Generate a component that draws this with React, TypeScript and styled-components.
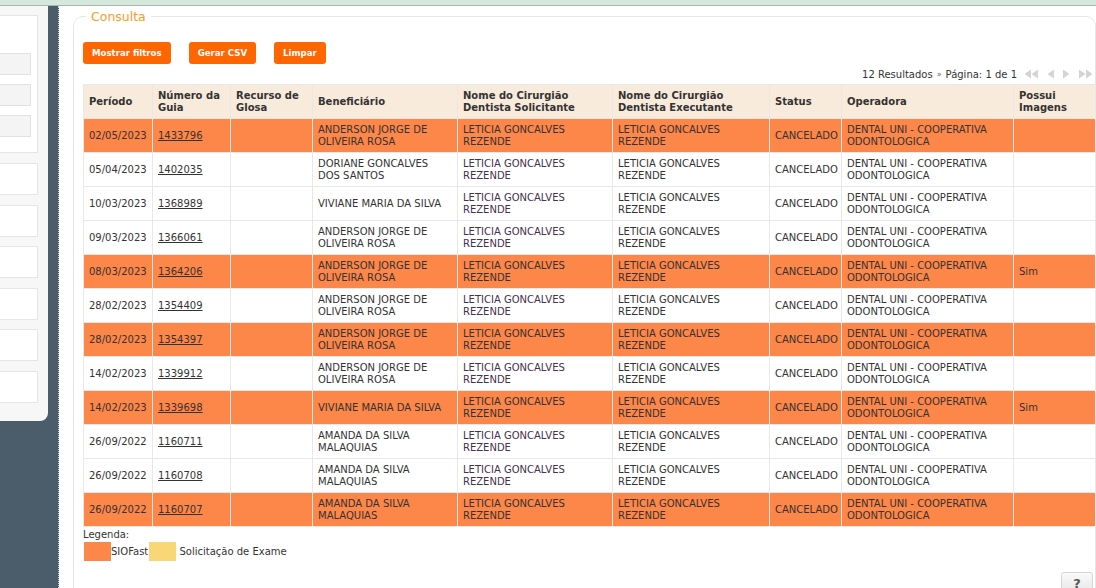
import React from "react";
import styled, { createGlobalStyle } from "styled-components";

const GlobalStyle = createGlobalStyle`
  html, body {
    margin: 0;
    padding: 0;
    height: 100%;
    overflow: hidden;
    background: #fff;
  }
  body {
    font-family: "DejaVu Sans", Verdana, sans-serif;
    font-size: 10px;
    color: #333;
  }
  #root {
    height: 100%;
  }
`;

const orange = "#fd8649";
const yellow = "#fad776";

const Page = styled.div`
  height: 588px;
  display: flex;
  flex-direction: column;
  position: relative;
  overflow: hidden;
`;

const TopStrip = styled.div`
  height: 5px;
  flex: none;
  background: #d5e8dc;
  border-bottom: 1px solid #a9b6ae;
`;

const Body = styled.div`
  flex: 1;
  display: flex;
  min-height: 0;
`;

const Sidebar = styled.aside`
  width: 58px;
  flex: none;
  background: #4b5c6b;
  border-right: 1px dotted #c9cfd4;
`;

const SidePanel = styled.div`
  width: 48px;
  height: 415px;
  background: #f7f7f7;
  border-bottom-right-radius: 8px;
  padding-top: 9px;
  box-sizing: border-box;
  display: flex;
  flex-direction: column;
  gap: 10px;
`;

const SideBox = styled.div<{ $h: number; $pad?: number }>`
  width: 38px;
  height: ${(p) => p.$h}px;
  flex: none;
  box-sizing: border-box;
  background: #fff;
  border: 1px solid #e6e6e6;
  border-left: none;
  display: flex;
  flex-direction: column;
  gap: 9px;
  padding-top: ${(p) => p.$pad ?? 0}px;
`;

const SideInput = styled.div`
  width: 31px;
  height: 22px;
  box-sizing: border-box;
  background: #f4f4f4;
  border: 1px solid #e2e2e2;
  border-left: none;
`;

const SideList = styled.div`
  display: flex;
  flex-direction: column;
  gap: 9.6px;
`;

const Main = styled.main`
  flex: 1;
  padding: 3px 0 0 14px;
  min-width: 0;
`;

const Fieldset = styled.fieldset`
  margin: 0;
  padding: 18px 0 0 9px;
  height: 700px;
  border: 1px solid #e6e6e6;
  border-radius: 10px;
  min-width: 0;
`;

const Legend = styled.legend`
  color: #ff9a22;
  font-size: 12.5px;
  padding: 0 5px;
  margin-left: 3px;
`;

const Toolbar = styled.div`
  display: flex;
  gap: 18px;
`;

const Button = styled.button`
  height: 22px;
  padding: 0 9px;
  border: none;
  border-radius: 3px;
  background: #ff6600;
  color: #fff;
  font-family: "DejaVu Sans", Verdana, sans-serif;
  font-weight: bold;
  font-size: 8.6px;
  cursor: pointer;
`;

const Pager = styled.div`
  width: 1012px;
  display: flex;
  justify-content: flex-end;
  align-items: center;
  height: 20px;
  color: #333;
`;

const PagerText = styled.span`
  display: flex;
  align-items: center;
  gap: 4px;
  margin-right: 7px;
  padding-top: 1px;
`;

const Chevrons = styled.span`
  font-size: 8px;
  color: #666;
`;

const PagerIcons = styled.span`
  display: flex;
  align-items: center;
  gap: 7px;
  padding-right: 2px;
`;

const Table = styled.table`
  width: 1012px;
  border-collapse: collapse;
  table-layout: fixed;
`;

const Th = styled.th<{ $w: number }>`
  width: ${(p) => p.$w}px;
  height: 34px;
  box-sizing: border-box;
  background: #f9ebdc;
  border: 1px solid #e8e8e8;
  text-align: left;
  padding: 0 5px;
  font-weight: bold;
  font-size: 10px;
  line-height: 12px;
  color: #333;
  vertical-align: middle;
`;

const Tr = styled.tr<{ $hl: boolean }>`
  background: ${(p) => (p.$hl ? orange : "#fff")};
`;

const Td = styled.td<{ $purple?: boolean }>`
  height: 34px;
  box-sizing: border-box;
  border: 1px solid #e8e8e8;
  padding: 0 5px;
  line-height: 12px;
  color: ${(p) => (p.$purple ? "#45304f" : "#333")};
  vertical-align: middle;
  overflow: hidden;
`;

const Link = styled.a`
  color: #333;
  text-decoration: underline;
  cursor: pointer;
`;

const LegendBox = styled.div`
  margin-top: 2px;
  line-height: 12px;
`;

const LegendRow = styled.div`
  display: flex;
  align-items: center;
  margin-top: 1px;
`;

const Swatch = styled.span<{ $c: string }>`
  display: inline-block;
  width: 27px;
  height: 19px;
  background: ${(p) => p.$c};
  margin-left: 1px;
`;

const HelpButton = styled.div`
  position: absolute;
  right: 3px;
  bottom: -6px;
  width: 30px;
  height: 20px;
  border: 1px solid #d6d6d6;
  border-radius: 3px;
  background: linear-gradient(#fafafa, #e6e6e6);
  color: #555;
  font-weight: bold;
  font-size: 13px;
  text-align: center;
  line-height: 22px;
`;

const Tri = ({ dir, double }: { dir: "l" | "r"; double?: boolean }) => {
  const w = double ? 15 : 9;
  const paths =
    dir === "l"
      ? double
        ? ["M7 0.5 L0.5 5 L7 9.5 Z", "M14 0.5 L7.5 5 L14 9.5 Z"]
        : ["M8 0.5 L1.5 5 L8 9.5 Z"]
      : double
      ? ["M1 0.5 L7.5 5 L1 9.5 Z", "M8 0.5 L14.5 5 L8 9.5 Z"]
      : ["M1 0.5 L7.5 5 L1 9.5 Z"];
  return (
    <svg width={w} height="10" viewBox={`0 0 ${w} 10`}>
      {paths.map((d) => (
        <path key={d} d={d} fill="#d4d4d4" />
      ))}
    </svg>
  );
};

const columns = [
  { label: "Período", w: 69 },
  { label: "Número da Guia", w: 78 },
  { label: "Recurso de Glosa", w: 82 },
  { label: "Beneficiário", w: 145 },
  { label: "Nome do Cirurgião Dentista Solicitante", w: 155 },
  { label: "Nome do Cirurgião Dentista Executante", w: 157 },
  { label: "Status", w: 72 },
  { label: "Operadora", w: 172 },
  { label: "Possui Imagens", w: 82 },
];

const ANDERSON = "ANDERSON JORGE DE OLIVEIRA ROSA";
const VIVIANE = "VIVIANE MARIA DA SILVA";
const AMANDA = "AMANDA DA SILVA MALAQUIAS";

const rows = [
  { d: "02/05/2023", g: "1433796", b: ANDERSON, hl: true, img: "" },
  { d: "05/04/2023", g: "1402035", b: "DORIANE GONCALVES DOS SANTOS", hl: false, img: "" },
  { d: "10/03/2023", g: "1368989", b: VIVIANE, hl: false, img: "" },
  { d: "09/03/2023", g: "1366061", b: ANDERSON, hl: false, img: "" },
  { d: "08/03/2023", g: "1364206", b: ANDERSON, hl: true, img: "Sim" },
  { d: "28/02/2023", g: "1354409", b: ANDERSON, hl: false, img: "" },
  { d: "28/02/2023", g: "1354397", b: ANDERSON, hl: true, img: "" },
  { d: "14/02/2023", g: "1339912", b: ANDERSON, hl: false, img: "" },
  { d: "14/02/2023", g: "1339698", b: VIVIANE, hl: true, img: "Sim" },
  { d: "26/09/2022", g: "1160711", b: AMANDA, hl: false, img: "" },
  { d: "26/09/2022", g: "1160708", b: AMANDA, hl: false, img: "" },
  { d: "26/09/2022", g: "1160707", b: AMANDA, hl: true, img: "" },
];

export default function App() {
  return (
    <>
      <GlobalStyle />
      <Page>
        <TopStrip />
        <Body>
          <Sidebar>
            <SidePanel>
              <SideBox $h={138} $pad={37}>
                <SideInput />
                <SideInput />
                <SideInput />
              </SideBox>
              <SideList>
                {[0, 1, 2, 3, 4, 5].map((i) => (
                  <SideBox key={i} $h={32} />
                ))}
              </SideList>
            </SidePanel>
          </Sidebar>
          <Main>
            <Fieldset>
              <Legend>Consulta</Legend>
              <Toolbar>
                <Button>Mostrar filtros</Button>
                <Button>Gerar CSV</Button>
                <Button>Limpar</Button>
              </Toolbar>
              <Pager>
                <PagerText>
                  12 Resultados <Chevrons>»</Chevrons> Página: 1 de 1
                </PagerText>
                <PagerIcons>
                  <Tri dir="l" double />
                  <Tri dir="l" />
                  <Tri dir="r" />
                  <Tri dir="r" double />
                </PagerIcons>
              </Pager>
              <Table>
                <thead>
                  <tr>
                    {columns.map((c) => (
                      <Th key={c.label} $w={c.w}>
                        {c.label}
                      </Th>
                    ))}
                  </tr>
                </thead>
                <tbody>
                  {rows.map((r) => (
                    <Tr key={r.g} $hl={r.hl}>
                      <Td>{r.d}</Td>
                      <Td>
                        <Link>{r.g}</Link>
                      </Td>
                      <Td />
                      <Td>{r.b}</Td>
                      <Td $purple={!r.hl}>LETICIA GONCALVES REZENDE</Td>
                      <Td>LETICIA GONCALVES REZENDE</Td>
                      <Td>CANCELADO</Td>
                      <Td>DENTAL UNI - COOPERATIVA ODONTOLOGICA</Td>
                      <Td>{r.img}</Td>
                    </Tr>
                  ))}
                </tbody>
              </Table>
              <LegendBox>
                Legenda:
                <LegendRow>
                  <Swatch $c={orange} />
                  SIOFast
                  <Swatch $c={yellow} />
                  &nbsp;Solicitação de Exame
                </LegendRow>
              </LegendBox>
            </Fieldset>
          </Main>
        </Body>
        <HelpButton>?</HelpButton>
      </Page>
    </>
  );
}
